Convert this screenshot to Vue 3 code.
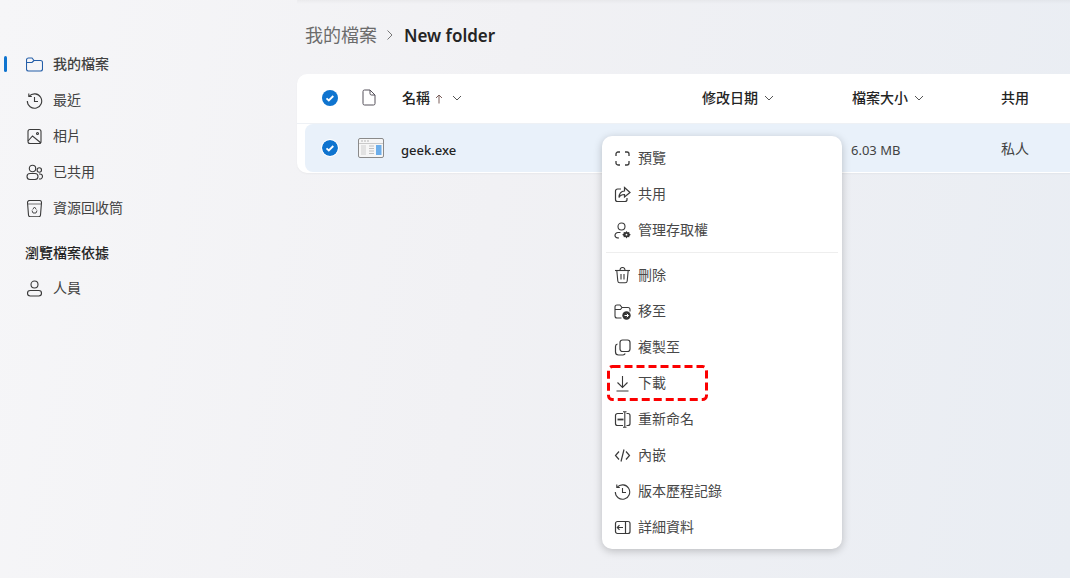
<script setup>
const navItems = [
  { label: '我的檔案', icon: 'folder', active: true },
  { label: '最近', icon: 'history' },
  { label: '相片', icon: 'photo' },
  { label: '已共用', icon: 'people' },
  { label: '資源回收筒', icon: 'recycle' },
]

const icons = {
  folder: '<path d="M.5 4a2 2 0 0 1 2-2h3.500l2 2.500h6.500a2 2 0 0 1 2 2v6.500a2 2 0 0 1-2 2h-12a2 2 0 0 1-2-2z" /><path d="M.5 6.500H6L8 4.500" />',
  history: '<path d="M3.200 4.200A7.200 7.200 0 1 1 1.300 9" /><path d="M2.800 1.500v3h3" /><path d="M8.500 5v4.500H12" />',
  photo: '<rect x="2" y="1.500" width="13" height="14" rx="2" /><path d="M2 13l4.500-5 8.500 7" /><circle cx="11.500" cy="5.500" r="1" />',
  people: '<circle cx="6.500" cy="4.500" r="3.200" /><rect x="1" y="9.500" width="11" height="6" rx="3" /><circle cx="13.300" cy="6" r="2.200" /><path d="M13 10h1a2.500 2.500 0 0 1 2.500 2.500 2.500 2.500 0 0 1-3.500 2.300" />',
  recycle: '<path d="M1.500 2.500a2 2 0 0 1 2-2h10a2 2 0 0 1 2 2l-1 12.500a2 2 0 0 1-2 1.800h-8a2 2 0 0 1-2-1.800z" /><path d="M2 4h13" stroke-width=".7" /><path d="M6.700 9.500l1.800-2.500 1.800 2.500M11 10.500l-1 2.500H7l-1-2.500" stroke-width=".9" />',
  person: '<circle cx="8.500" cy="4.500" r="3.500" /><rect x="1.500" y="10.500" width="14" height="5.500" rx="2.700" />',
  preview: '<path d="M2 6V4a2 2 0 0 1 2-2h2M11 2h2a2 2 0 0 1 2 2v2M15 11v2a2 2 0 0 1-2 2h-2M6 15H4a2 2 0 0 1-2-2v-2" stroke-width="1.300" />',
  share: '<path d="M7 3H3.500a2 2 0 0 0-2 2v8.500a2 2 0 0 0 2 2H11a2 2 0 0 0 2-2V12" stroke-width="1.200" /><path d="M10.500 1.500l5.500 5-5.500 4.500V8.500c-2.500 0-4.500 1-5.500 3 0-3.500 2-6.500 5.500-6.500z" stroke-width="1.200" />',
  access: '<circle cx="7.500" cy="4.500" r="3.500" /><path d="M6.500 10.500H4a3 3 0 0 0-3 3c0 1.500 1.500 2.500 4 2.500" stroke-width="1.200" /><path d="M12.500 9l1 1.300 1.700-.2.300 1.600 1.300 1-1.300 1-.3 1.600-1.700-.2-1 1.300-1-1.300-1.700.2-.3-1.600-1.300-1 1.300-1 .3-1.600 1.700.2z" fill="#333" stroke="none" /><circle cx="12.500" cy="12.700" r=".9" fill="#fff" stroke="none" />',
  trash: '<path d="M1 3.500h15" /><path d="M6 3.500V3a2.500 2.500 0 0 1 5 0v.5" /><path d="M2.800 3.500l1 10.500a2 2 0 0 0 2 1.800h5.400a2 2 0 0 0 2-1.800l1-10.500" /><path d="M7 7v5.500M10 7v5.500" />',
  move: '<path d="M7.500 15H3a2 2 0 0 1-2-2V4a2 2 0 0 1 2-2h3l2 2.500h6a2 2 0 0 1 2 2V8.500" /><path d="M1 6.500h5.500L8 4.500" /><circle cx="12.500" cy="12.500" r="4.200" fill="#333" stroke="none" /><path d="M10.500 12.500h4M12.800 10.800l1.700 1.700-1.700 1.700" stroke="#fff" stroke-width="1" />',
  copy: '<rect x="6" y="1" width="10" height="11.500" rx="2.500" stroke-width="1.200" /><path d="M3.500 5a2.500 2.500 0 0 0-2 2.500V13a3 3 0 0 0 3 3H9a2.500 2.500 0 0 0 2.200-1.500" stroke-width="1.200" />',
  download: '<path d="M8.500 1v11.500M3.500 7.500l5 5 5-5M2.500 16h12" />',
  rename: '<path d="M9 2.500H3.500a2 2 0 0 0-2 2v8a2 2 0 0 0 2 2H9" stroke-width="1.200" /><path d="M12.500 2.500H14a2 2 0 0 1 2 2v8a2 2 0 0 1-2 2h-1.500" stroke-width="1.200" /><path d="M9 .8h3.500M9 16.200h3.500M10.800.8v15.400" /><path d="M3.500 8.500h6" stroke-width="1.800" />',
  embed: '<path d="M5 4.500L1.500 8.500 5 12.500M12 4.500l3.500 4-3.500 4M10 2.500l-3 12" stroke-width="1.200" />',
  details: '<rect x="1.500" y="2.500" width="14.500" height="12" rx="2" stroke-width="1.200" /><path d="M11.500 2.500v12M9 8.500H3.500M5.500 6.200L3.300 8.500l2.200 2.300" stroke-width="1.200" />',
}

const menuGroups = [
  [
    { label: '預覽', icon: 'preview' },
    { label: '共用', icon: 'share' },
    { label: '管理存取權', icon: 'access' },
  ],
  [
    { label: '刪除', icon: 'trash' },
    { label: '移至', icon: 'move' },
    { label: '複製至', icon: 'copy' },
    { label: '下載', icon: 'download', marked: true },
    { label: '重新命名', icon: 'rename' },
    { label: '內嵌', icon: 'embed' },
    { label: '版本歷程記錄', icon: 'history' },
    { label: '詳細資料', icon: 'details' },
  ],
]
</script>

<template>
  <div class="page">
    <aside class="sidebar">
      <nav class="nav">
        <a v-for="item in navItems" :key="item.label" class="nav-item" :class="{ active: item.active }">
          <svg class="icon" viewBox="0 0 17 17" v-html="icons[item.icon]"></svg>
          <span>{{ item.label }}</span>
        </a>
      </nav>
      <h3 class="nav-heading">瀏覽檔案依據</h3>
      <a class="nav-item">
        <svg class="icon" viewBox="0 0 17 17" v-html="icons.person"></svg>
        <span>人員</span>
      </a>
    </aside>

    <main class="main">
      <div class="crumbs">
        <span class="crumb-root">我的檔案</span>
        <svg class="crumb-sep" viewBox="0 0 8 12"><path d="M1.500 1.500L6 6l-4.500 4.500" /></svg>
        <span class="crumb-current">New folder</span>
      </div>

      <section class="table">
        <div class="row head">
          <span class="col-check">
            <svg class="check" viewBox="0 0 16 16"><circle cx="8" cy="8" r="8" /><path d="M4.500 8.300l2.300 2.200 4.500-4.500" /></svg>
          </span>
          <span class="col-type">
            <svg class="file-icon" viewBox="0 0 14 17"><path d="M2.500 1h5.500l5 5v8.500a1.500 1.500 0 0 1-1.500 1.500h-9A1.500 1.500 0 0 1 1 14.500v-12A1.500 1.500 0 0 1 2.500 1z" /><path d="M8 1v3.500A1.500 1.500 0 0 0 9.500 6H13" /></svg>
          </span>
          <span class="col-name">
            <b class="label">名稱</b>
            <svg class="arrow" viewBox="0 0 8 10"><path d="M4 9.500V1M1 4l3-3 3 3" /></svg>
            <svg class="chev" viewBox="0 0 10 6"><path d="M1 1l4 4 4-4" /></svg>
          </span>
          <span class="col-date">
            <b class="label">修改日期</b>
            <svg class="chev" viewBox="0 0 10 6"><path d="M1 1l4 4 4-4" /></svg>
          </span>
          <span class="col-size">
            <b class="label">檔案大小</b>
            <svg class="chev" viewBox="0 0 10 6"><path d="M1 1l4 4 4-4" /></svg>
          </span>
          <span class="col-share"><b class="label">共用</b></span>
        </div>
        <div class="row file">
          <span class="col-check">
            <svg class="check" viewBox="0 0 16 16"><circle cx="8" cy="8" r="8" /><path d="M4.500 8.300l2.300 2.200 4.500-4.500" /></svg>
          </span>
          <span class="col-type">
            <svg class="exe-icon" viewBox="0 0 26 20">
              <rect x=".5" y=".5" width="25" height="19" rx="1.500" fill="#f6f6f6" stroke="#8a8a8a" />
              <path d="M1 5.500h24" stroke="#c9c9c9" />
              <path d="M3 3h2M6 3h2M9 3h2" stroke="#b5b5b5" />
              <rect x="3" y="7" width="5" height="10" fill="#e2e2e2" />
              <path d="M11 8h5M11 10.500h5M11 13h5M11 15.500h5" stroke="#c0c0c0" />
              <rect x="18" y="7" width="5.500" height="10" fill="#6daeea" />
            </svg>
          </span>
          <span class="col-name file-name">geek.exe</span>
          <span class="col-date"></span>
          <span class="col-size file-size">6.03 MB</span>
          <span class="col-share">私人</span>
        </div>
      </section>
    </main>

    <div class="menu">
      <template v-for="(group, i) in menuGroups" :key="i">
        <div v-if="i > 0" class="menu-line"></div>
        <div v-for="item in group" :key="item.label" class="menu-item">
          <svg class="icon" viewBox="0 0 17 17" v-html="icons[item.icon]"></svg>
          <span>{{ item.label }}</span>
          <svg v-if="item.marked" class="mark" viewBox="0 0 101 36">
            <rect x="1.500" y="1.500" width="98" height="33" rx="4" />
          </svg>
        </div>
      </template>
    </div>
  </div>
</template>

<style>
html, body {
  margin: 0;
  overflow: hidden;
}
</style>

<style scoped>
.page {
  position: relative;
  display: flex;
  width: 1070px;
  height: 578px;
  overflow: hidden;
  background: linear-gradient(100deg, #f6f6f8 0%, #f1f1f4 45%, #e9edf3 100%);
  font-family: "Noto Sans", "Noto Sans CJK TC", sans-serif;
  font-size: 14px;
  color: #424242;
}
.icon {
  width: 17px;
  height: 17px;
  flex: none;
  fill: none;
  stroke: #3a3a3a;
  stroke-width: 1.100;
}
.sidebar {
  width: 297px;
  flex: none;
  padding-top: 46px;
  box-sizing: border-box;
}
.nav-item {
  position: relative;
  display: flex;
  align-items: center;
  gap: 10px;
  height: 36px;
  padding-left: 26px;
}
.nav-item.active::before {
  content: "";
  position: absolute;
  left: 4px;
  top: 10px;
  width: 3px;
  height: 16px;
  border-radius: 2px;
  background: #0f74cf;
}
.nav-item.active .icon {
  stroke: #245ea8;
}
.nav-item.active span {
  font-weight: 500;
}
.nav-item span,
.menu-item span {
  line-height: 20px;
}
.nav-heading {
  margin: 15px 0 0;
  padding-left: 25px;
  height: 29px;
  line-height: 24px;
  font-size: 14px;
  font-weight: 500;
  color: #242424;
}
.main {
  position: relative;
  flex: 1;
  min-width: 0;
}
.main::before {
  content: "";
  position: absolute;
  left: 0;
  top: 0;
  right: 0;
  height: 4px;
  background: linear-gradient(rgba(0, 0, 0, 0.035), transparent);
}
.crumbs {
  display: flex;
  align-items: center;
  height: 70px;
  padding-left: 8px;
  box-sizing: border-box;
}
.crumb-root {
  margin-bottom: 3px;
  font-size: 18px;
  color: #6b6b6b;
}
.crumb-sep {
  width: 8px;
  height: 12px;
  margin: 0 10px 0 9px;
  fill: none;
  stroke: #777;
}
.crumb-current {
  font-size: 17px;
  font-weight: 600;
  color: #242424;
}
.table {
  margin-top: 4px;
  width: 800px;
  height: 99px;
  background: #fff;
  border-radius: 10px;
  box-shadow: 0 1px 2px rgba(0, 0, 0, 0.04);
}
.row {
  display: flex;
  align-items: center;
}
.head {
  height: 47px;
  padding-bottom: 2px;
  border-bottom: 1px solid #eef1f5;
  color: #242424;
}
.label {
  margin-bottom: 2px;
  font-weight: 500;
}
.file {
  height: 48px;
  margin-left: 8px;
  border-radius: 8px 0 0 8px;
  background: #e9f1fa;
}
.col-check {
  display: flex;
  width: 61px;
  flex: none;
  padding-left: 25px;
  box-sizing: border-box;
}
.file .col-check {
  padding-left: 17px;
  width: 53px;
}
.check {
  width: 16px;
  height: 16px;
}
.file .check {
  border-radius: 50%;
  box-shadow: 0 0 0 1px #fff;
}
.check circle {
  fill: #0f74cf;
}
.check path {
  fill: none;
  stroke: #fff;
  stroke-width: 1.800;
}
.col-type {
  display: flex;
  width: 44px;
  flex: none;
}
.file .col-type {
  width: 43px;
}
.file-icon {
  width: 14px;
  height: 17px;
  margin-left: 4px;
  fill: none;
  stroke: #55505a;
}
.exe-icon {
  width: 26px;
  height: 20px;
}
.col-name {
  display: flex;
  align-items: center;
  width: 300px;
  flex: none;
  gap: 5px;
}
.file-name {
  padding-top: 4px;
  font-size: 13px;
  font-weight: 500;
  color: #242424;
}
.arrow {
  width: 8px;
  height: 10px;
  margin-top: 2px;
  fill: none;
  stroke: #7a5f5a;
}
.chev {
  width: 10px;
  height: 6px;
  margin-left: 4px;
  fill: none;
  stroke: #555;
}
.col-date .chev,
.col-size .chev {
  margin-left: 1px;
}
.col-date {
  display: flex;
  align-items: center;
  gap: 5px;
  width: 150px;
  flex: none;
}
.col-size {
  display: flex;
  align-items: center;
  gap: 5px;
  width: 150px;
  flex: none;
}
.file-size {
  padding-top: 4px;
  font-size: 13px;
}
.col-share {
  display: flex;
  flex: none;
  margin-left: -1px;
}
.file .col-share {
  margin-left: 0;
}
.menu {
  position: absolute;
  left: 602px;
  top: 136px;
  width: 240px;
  height: 413px;
  padding: 4px 0;
  box-sizing: border-box;
  background: #fff;
  border-radius: 10px;
  box-shadow: 0 2px 8px rgba(0, 0, 0, 0.22);
}
.menu-item {
  position: relative;
  display: flex;
  align-items: center;
  gap: 7px;
  height: 36px;
  padding-left: 12px;
  color: #484848;
}
.menu-line {
  height: 1px;
  margin: 4px;
  background: #eeeeee;
}
.mark {
  position: absolute;
  left: 5px;
  top: 0;
  width: 101px;
  height: 36px;
  fill: none;
  stroke: #fb0000;
  stroke-width: 3;
  stroke-dasharray: 8 4;
}
</style>
